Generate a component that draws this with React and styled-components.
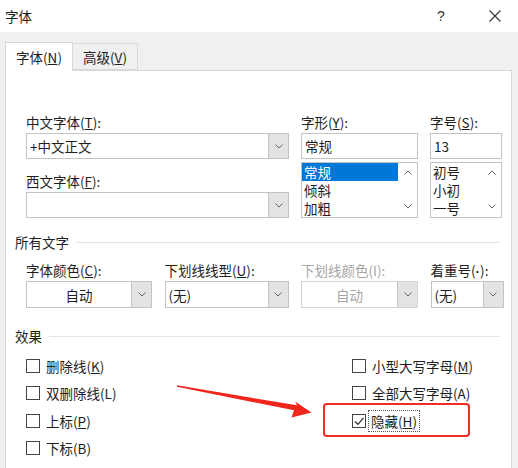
import React from 'react';
import styled, {createGlobalStyle} from 'styled-components';

const GlobalStyle = createGlobalStyle`
  html, body {
    margin: 0;
    padding: 0;
    background: #f0f0f0;
  }
  body {
    font-family: "Noto Sans CJK SC", "Noto Sans", sans-serif;
    font-size: 13.5px;
    color: #1e1e1e;
  }
`;

const Chevron = ({up}) => (
	<svg width="8" height="5" viewBox="0 0 8 5">
		<polyline
			points={up ? '0.5,4.5 4,1 7.5,4.5' : '0.5,0.5 4,4 7.5,0.5'}
			fill="none"
			stroke="#666"
			strokeWidth="1"
		/>
	</svg>
);

const U = styled.span`
    text-decoration: underline;
    text-underline-offset: 1px;
`;

const Dot = styled.span`
    font-family: "Liberation Sans", sans-serif;
    font-weight: bold;
`;

const Combo = ({text, center, disabled, h}) => (
	<ComboBox $h={h} $disabled={disabled}>
		<ComboText $center={center} $disabled={disabled}>{text}</ComboText>
		<DropButton><Chevron/></DropButton>
	</ComboBox>
);

const ListBox = ({items, selected}) => (
	<ListFrame>
		<ListItems>
			{items.map((item) => (
				<ListItem key={item} $selected={item === selected}>{item}</ListItem>
			))}
		</ListItems>
		<ScrollTrack>
			<Chevron up/>
			<Chevron/>
		</ScrollTrack>
	</ListFrame>
);

const Check = ({label, checked, focus}) => (
	<CheckRow>
		<Box>
			{checked && (
				<svg width="12" height="12" viewBox="0 0 12 12">
					<polyline points="2,6.5 5,9.3 10.5,2.8" fill="none" stroke="#333" strokeWidth="1.3"/>
				</svg>
			)}
		</Box>
		<CheckLabel $focus={focus}>{label}</CheckLabel>
	</CheckRow>
);

export default function App() {
	return (
		<Window>
			<GlobalStyle/>
			<TitleBar>
				<TitleText>字体</TitleText>
				<CaptionButtons>
					<CaptionButton>?</CaptionButton>
					<CaptionButton>
						<svg width="12" height="12" viewBox="0 0 12 12">
							<path d="M0.5 0.5 L11.5 11.5 M11.5 0.5 L0.5 11.5" stroke="#333" strokeWidth="1.1"/>
						</svg>
					</CaptionButton>
				</CaptionButtons>
			</TitleBar>

			<TabStrip>
				<Tab $active>字体(<U>N</U>)</Tab>
				<Tab>高级(<U>V</U>)</Tab>
			</TabStrip>

			<Panel>
				<FontGrid>
					<Field>
						<Label>中文字体(<U>T</U>):</Label>
						<Combo text="+中文正文"/>
						<Label $top={14}>西文字体(<U>F</U>):</Label>
						<Combo text=""/>
					</Field>
					<Field>
						<Label>字形(<U>Y</U>):</Label>
						<TextBox>常规</TextBox>
						<ListBox items={['常规', '倾斜', '加粗']} selected="常规"/>
					</Field>
					<Field>
						<Label>字号(<U>S</U>):</Label>
						<TextBox>13</TextBox>
						<ListBox items={['初号', '小初', '一号']}/>
					</Field>
				</FontGrid>

				<SectionHeader $top={16}>所有文字</SectionHeader>
				<StyleGrid>
					<Field>
						<Label>字体颜色(<U>C</U>):</Label>
						<Combo text="自动" center h={27}/>
					</Field>
					<Field>
						<Label>下划线线型(<U>U</U>):</Label>
						<Combo text="(无)" h={27}/>
					</Field>
					<Field>
						<Label $disabled>下划线颜色(I):</Label>
						<Combo text="自动" center disabled h={27}/>
					</Field>
					<Field>
						<Label>着重号(<Dot>·</Dot>):</Label>
						<Combo text="(无)" h={27}/>
					</Field>
				</StyleGrid>

				<SectionHeader $top={20}>效果</SectionHeader>
				<EffectGrid>
					<CheckCol>
						<Check label={<>删除线(<U>K</U>)</>}/>
						<Check label="双删除线(L)"/>
						<Check label={<>上标(<U>P</U>)</>}/>
						<Check label="下标(B)"/>
					</CheckCol>
					<CheckCol>
						<Check label={<>小型大写字母(<U>M</U>)</>}/>
						<Check label="全部大写字母(A)"/>
						<Check label={<>隐藏(<U>H</U>)</>} checked focus/>
					</CheckCol>
				</EffectGrid>
			</Panel>

			<RedFrame/>
			<ArrowMark width="150" height="45" viewBox="0 0 150 45">
				<polygon
					points="7,5.3 127,25.3 125,21.5 141.5,32.5 121.5,37.5 124,30.3 7,6.8"
					fill="#f0261c"
				/>
			</ArrowMark>
		</Window>
	);
}

const Window = styled.div`
    position: relative;
    width: 518px;
    height: 468px;
    display: flex;
    flex-direction: column;
    background: #f0f0f0;
    overflow: hidden;
`;

const TitleBar = styled.div`
    height: 32px;
    flex: none;
    background: #fff;
    display: flex;
    align-items: center;
    padding-left: 5px;
`;

const TitleText = styled.span`
    font-size: 13.5px;
    line-height: 16px;
`;

const CaptionButtons = styled.div`
    margin-left: auto;
    display: flex;
    gap: 8px;
`;

const CaptionButton = styled.div`
    width: 46px;
    height: 30px;
    display: flex;
    align-items: center;
    justify-content: center;
    font-family: "Liberation Sans", sans-serif;
    font-size: 14px;
    color: #333;
`;

const TabStrip = styled.div`
    height: 38px;
    flex: none;
    display: flex;
    align-items: flex-end;
    padding-left: 5px;
    position: relative;
    z-index: 1;
`;

const Tab = styled.div`
    box-sizing: border-box;
    height: ${p => p.$active ? 29 : 27}px;
    width: ${p => p.$active ? 68 : 65}px;
    margin-bottom: ${p => p.$active ? -1 : 0}px;
    background: ${p => p.$active ? '#fff' : '#f0f0f0'};
    border: 1px solid #d9d9d9;
    border-bottom: ${p => p.$active ? 'none' : '1px solid #d9d9d9'};
    border-left: ${p => p.$active ? '1px solid #d9d9d9' : 'none'};
    display: flex;
    align-items: center;
    justify-content: center;
    line-height: 16px;
    padding-bottom: ${p => p.$active ? 1 : 0}px;
`;

const Panel = styled.div`
    flex: 1;
    margin: 0 6px 0 5px;
    background: #fff;
    border: 1px solid #d9d9d9;
    border-bottom: none;
    padding: 43px 9px 0;
    display: flex;
    flex-direction: column;
`;

const FontGrid = styled.div`
    display: grid;
    grid-template-columns: 263px 117px 72px;
    column-gap: 12px;
    margin-left: 11px;
`;

const StyleGrid = styled.div`
    display: grid;
    grid-template-columns: 126px 124px 117px 73px;
    column-gap: 12.5px;
    margin: 12px 0 0 11px;
`;

const Field = styled.div`
    display: flex;
    flex-direction: column;
`;

const Label = styled.div`
    line-height: 16px;
    height: 16px;
    margin-top: ${p => p.$top || 0}px;
    margin-bottom: 3px;
    white-space: nowrap;
    color: ${p => p.$disabled ? '#a6a6a6' : '#1e1e1e'};
`;

const ComboBox = styled.div`
    box-sizing: border-box;
    height: ${p => p.$h || 26}px;
    border: 1px solid ${p => p.$disabled ? '#d4d4d4' : '#c3c3c3'};
    background: #fff;
    display: flex;
`;

const ComboText = styled.div`
    flex: 1;
    display: flex;
    align-items: center;
    justify-content: ${p => p.$center ? 'center' : 'flex-start'};
    padding-left: ${p => p.$center ? 0 : 3}px;
    color: ${p => p.$disabled ? '#a6a6a6' : '#1e1e1e'};
    white-space: nowrap;
`;

const DropButton = styled.div`
    width: 19px;
    background: #e3e3e3;
    border-left: 1px solid #c3c3c3;
    display: flex;
    align-items: center;
    justify-content: center;
`;

const TextBox = styled.div`
    box-sizing: border-box;
    height: 26px;
    border: 1px solid #c3c3c3;
    display: flex;
    align-items: center;
    padding-left: 3px;
`;

const ListFrame = styled.div`
    box-sizing: border-box;
    height: 56px;
    margin-top: 3px;
    border: 1px solid #c3c3c3;
    display: flex;
`;

const ListItems = styled.div`
    flex: 1;
    display: flex;
    flex-direction: column;
`;

const ListItem = styled.div`
    height: 18px;
    line-height: 18px;
    padding-left: 2px;
    overflow: hidden;
    background: ${p => p.$selected ? '#0078d7' : 'transparent'};
    color: ${p => p.$selected ? '#fff' : '#1e1e1e'};
`;

const ScrollTrack = styled.div`
    width: 19px;
    display: flex;
    flex-direction: column;
    align-items: center;
    justify-content: space-between;
    padding: 7px 0 8px;
`;

const SectionHeader = styled.div`
    display: flex;
    align-items: center;
    gap: 7px;
    height: 16px;
    line-height: 16px;
    margin-top: ${p => p.$top}px;
    margin-right: 3px;
    &::after {
        content: "";
        flex: 1;
        height: 1px;
        background: #e3e3e3;
    }
`;

const EffectGrid = styled.div`
    display: grid;
    grid-template-columns: 326px auto;
    margin: 8px 0 0 11px;
`;

const CheckCol = styled.div`
    display: flex;
    flex-direction: column;
`;

const CheckRow = styled.div`
    height: 27.5px;
    display: flex;
    align-items: center;
`;

const Box = styled.div`
    box-sizing: border-box;
    width: 14px;
    height: 14px;
    border: 1px solid #444;
    background: #fff;
    display: flex;
    align-items: center;
    justify-content: center;
`;

const CheckLabel = styled.span`
    line-height: 16px;
    margin-left: ${p => p.$focus ? 3 : 6}px;
    padding: ${p => p.$focus ? '2px 2px' : '0'};
    outline: ${p => p.$focus ? '1px dotted #555' : 'none'};
    white-space: nowrap;
`;

const RedFrame = styled.div`
    position: absolute;
    left: 323px;
    top: 403px;
    width: 147px;
    height: 34px;
    box-sizing: border-box;
    border: 2.5px solid #ee2b24;
    border-radius: 4px;
`;

const ArrowMark = styled.svg`
    position: absolute;
    left: 170px;
    top: 380px;
    pointer-events: none;
`;
